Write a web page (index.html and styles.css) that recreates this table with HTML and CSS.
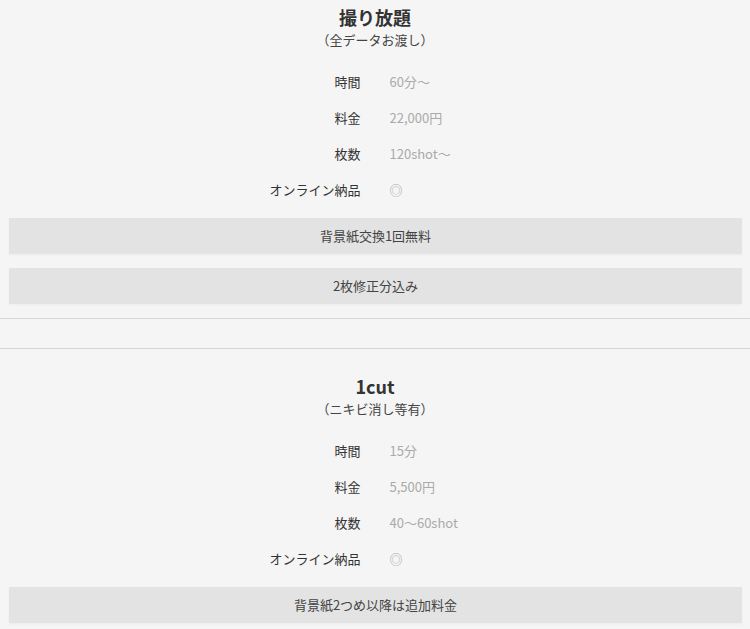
FILE: index.html
```html
<!DOCTYPE html>
<html lang="ja">
<head>
    <meta charset="UTF-8">
    <meta name="viewport" content="width=device-width, initial-scale=1.0">
    <title>料金プラン</title>
    <link rel="stylesheet" href="styles.css">
</head>
<body>
    <div class="plans">
        <div class="plan">
            <h2 class="plan-title">撮り放題</h2>
            <p class="plan-sub">（全データお渡し）</p>
            <dl class="plan-table">
                <dt>時間</dt><dd>60分〜</dd>
                <dt>料金</dt><dd>22,000円</dd>
                <dt>枚数</dt><dd>120shot〜</dd>
                <dt>オンライン納品</dt><dd>◎</dd>
            </dl>
            <div class="plan-notes">
                <div class="note">背景紙交換1回無料</div>
                <div class="note">2枚修正分込み</div>
            </div>
        </div>

        <div class="plan">
            <h2 class="plan-title">1cut</h2>
            <p class="plan-sub">（ニキビ消し等有）</p>
            <dl class="plan-table">
                <dt>時間</dt><dd>15分</dd>
                <dt>料金</dt><dd>5,500円</dd>
                <dt>枚数</dt><dd>40〜60shot</dd>
                <dt>オンライン納品</dt><dd>◎</dd>
            </dl>
            <div class="plan-notes">
                <div class="note">背景紙2つめ以降は追加料金</div>
            </div>
        </div>
    </div>
</body>
</html>
```

FILE: styles.css
```css
* {
    margin: 0;
    padding: 0;
    box-sizing: border-box;
}

body {
    font-family: "Noto Sans CJK JP", "Noto Sans", sans-serif;
    background: #f5f5f5;
    color: #333;
    overflow: hidden;
}

.plans {
    margin-top: -21px;
}

.plan {
    border-top: 1px solid #d6d6d6;
    border-bottom: 1px solid #d6d6d6;
    padding: 24px 0 14px;
    text-align: center;
}

.plan + .plan {
    margin-top: 29px;
}

.plan-title {
    font-size: 18px;
    line-height: 26px;
    font-weight: bold;
    color: #333;
}

.plan-sub {
    font-size: 13px;
    line-height: 20px;
    color: #444;
}

.plan-table {
    display: grid;
    grid-template-columns: 1fr 1fr;
    column-gap: 29px;
    margin-top: 14px;
    font-size: 13px;
    line-height: 36px;
}

.plan-table dt {
    text-align: right;
    color: #333;
}

.plan-table dd {
    text-align: left;
    color: #aaa;
}

.plan-notes {
    display: flex;
    flex-direction: column;
    gap: 14px;
    margin: 10px 8px 0 9px;
}

.note {
    background: #e3e3e3;
    height: 36px;
    line-height: 36px;
    font-size: 13px;
    color: #444;
    box-shadow: 0 1px 2px rgba(0, 0, 0, 0.04);
}
```
